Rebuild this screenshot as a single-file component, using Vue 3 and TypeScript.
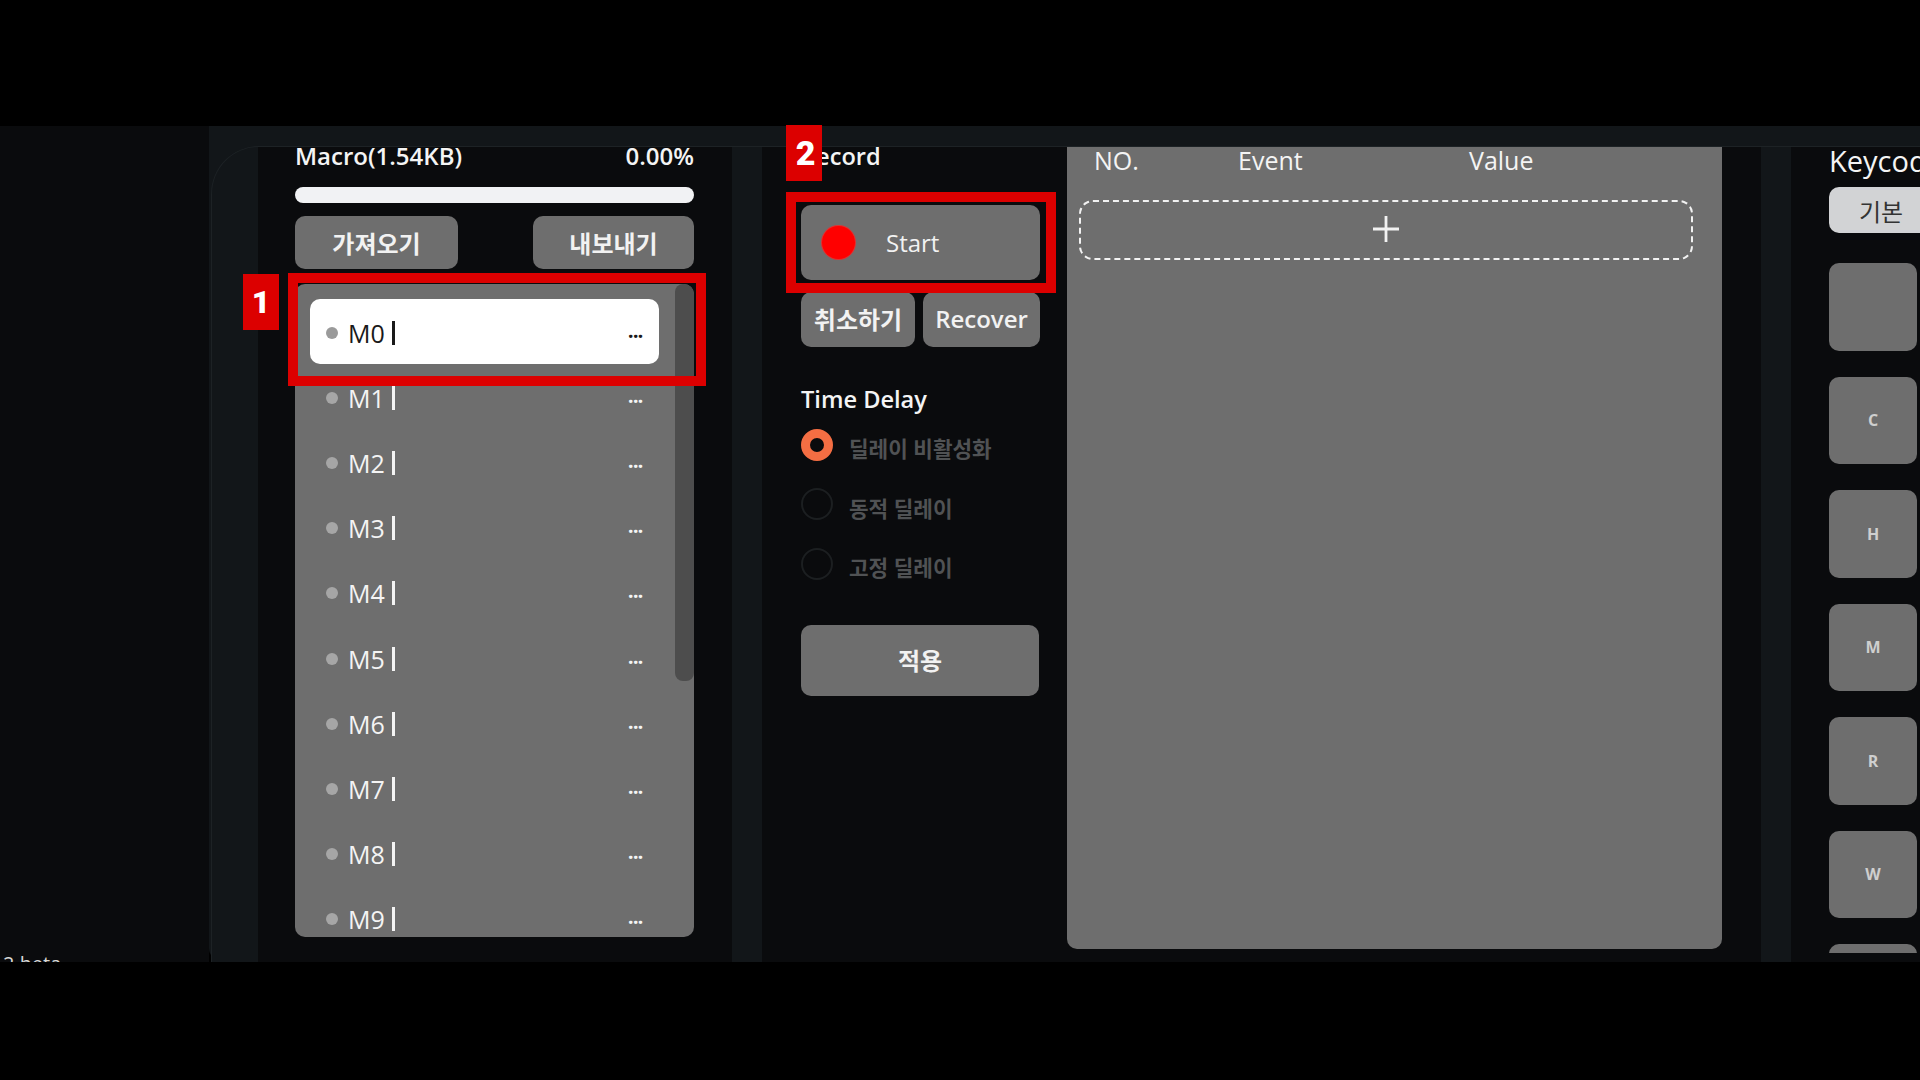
<script setup lang="ts">
const macros = ['M0', 'M1', 'M2', 'M3', 'M4', 'M5', 'M6', 'M7', 'M8', 'M9'];
const delays = ['딜레이 비활성화', '동적 딜레이', '고정 딜레이'];
const keys = ['', 'C', 'H', 'M', 'R', 'W', ''];
</script>

<template>
  <div class="page">
    <div class="frame">
      <aside class="sidebar">
        <span class="version">2 beta</span>
      </aside>

      <main class="main">
        <div class="content">
          <section class="panel panel-macro">
            <div class="stats">
              <span>Macro(1.54KB)</span>
              <span>0.00%</span>
            </div>
            <div class="progress"></div>
            <div class="io-row">
              <button class="btn btn-import">가져오기</button>
              <button class="btn btn-export">내보내기</button>
            </div>
            <div class="macro-list">
              <div class="scrollbar"></div>
              <div
                v-for="(name, i) in macros"
                :key="name"
                class="macro-row"
                :class="{ active: i === 0 }"
              >
                <span class="dot"></span>
                <span class="macro-name">{{ name }}</span>
                <span class="caret"></span>
                <span class="more">...</span>
              </div>
            </div>
          </section>

          <section class="panel panel-record">
            <div class="record-col">
              <div class="title">Record</div>
              <button class="btn btn-start">
                <span class="rec-dot"></span>
                <span>Start</span>
              </button>
              <div class="action-row">
                <button class="btn btn-cancel">취소하기</button>
                <button class="btn btn-recover">Recover</button>
              </div>
              <div class="title delay-title">Time Delay</div>
              <div class="radio-group">
                <div v-for="(label, i) in delays" :key="label" class="radio-row">
                  <span class="radio" :class="{ checked: i === 0 }"></span>
                  <span class="radio-label">{{ label }}</span>
                </div>
              </div>
              <button class="btn btn-apply">적용</button>
            </div>

            <div class="event-table">
              <div class="table-head">
                <span class="col-no">NO.</span>
                <span class="col-event">Event</span>
                <span>Value</span>
              </div>
              <div class="add-row">
                <svg width="30" height="30" viewBox="0 0 30 30">
                  <path d="M15 2v26M2 15h26" stroke="#f2f2f2" stroke-width="2.8" fill="none" />
                </svg>
              </div>
            </div>
          </section>

          <section class="panel panel-keys">
            <div class="keys-title">Keycode</div>
            <div class="tab">기본</div>
            <div class="key-list">
              <div v-for="(k, i) in keys" :key="i" class="key">{{ k }}</div>
            </div>
          </section>
        </div>
      </main>
    </div>

    <!-- 标注层 -->
    <div class="mark-box mark-box-1"></div>
    <div class="mark-badge mark-badge-1">1</div>
    <div class="mark-box mark-box-2"></div>
    <div class="mark-badge mark-badge-2">2</div>
  </div>
</template>

<style>
html,
body {
  margin: 0;
  background: #000;
}
</style>

<style scoped>
.page {
  position: relative;
  width: 1920px;
  height: 1080px;
  box-sizing: border-box;
  padding-top: 126px;
  overflow: hidden;
  background: #000;
  font-family: 'Open Sans', 'Noto Sans CJK KR', sans-serif;
  color: #f4f4f4;
}

.frame {
  display: flex;
  height: 836px;
  overflow: hidden;
}

.sidebar {
  display: flex;
  align-items: flex-end;
  flex: 0 0 209px;
  background: #0a0b0d;
}

.version {
  margin: 0 0 -12px 3px;
  font-size: 20px;
  line-height: 20px;
  color: #d8d8d8;
}

.main {
  flex: 1;
  min-width: 0;
  padding-top: 20px;
  background: #121619;
  border-bottom-left-radius: 14px;
}

.content {
  display: flex;
  gap: 30px;
  height: 816px;
  box-sizing: border-box;
  padding-left: 46px;
  margin-left: 2px;
  background: #121619;
  border-top: 1px solid #1d2225;
  border-left: 1px solid #1d2225;
  border-top-left-radius: 48px;
}

.panel {
  overflow: hidden;
  background: #0a0b0d;
}

.panel-macro {
  flex: 0 0 437px;
  padding-left: 37px;
}

.stats {
  display: flex;
  justify-content: space-between;
  width: 399px;
  margin-top: -7px;
  font-size: 24px;
  font-weight: 600;
  line-height: 32px;
}

.progress {
  width: 399px;
  height: 16px;
  margin-top: 15px;
  border-radius: 8px;
  background: #f1f2f4;
}

.io-row {
  display: flex;
  justify-content: space-between;
  width: 399px;
  margin-top: 13px;
}

.btn {
  display: flex;
  align-items: center;
  justify-content: center;
  padding: 0;
  border: 0;
  border-radius: 10px;
  background: #6e6e6e;
  color: #f2f2f2;
  font-family: inherit;
  font-size: 24px;
  font-weight: 600;
}

.btn-import {
  width: 163px;
  height: 53px;
}

.btn-export {
  width: 161px;
  height: 53px;
}

.macro-list {
  position: relative;
  width: 399px;
  height: 653px;
  box-sizing: border-box;
  margin-top: 15px;
  padding: 15px 0 0 15px;
  overflow: hidden;
  border-radius: 10px;
  background: #6e6e6e;
}

.scrollbar {
  position: absolute;
  top: 0;
  right: 0;
  width: 19px;
  height: 397px;
  border-radius: 8px;
  background: #4d4d4d;
}

.macro-row {
  display: flex;
  align-items: center;
  width: 349px;
  height: 65.2px;
  box-sizing: border-box;
  padding: 2px 16px 0 16px;
  border-radius: 10px;
  font-size: 25px;
  color: #f4f4f4;
}

.macro-row.active {
  background: #fff;
  color: #1a1a1a;
}

.dot {
  flex: 0 0 12px;
  height: 12px;
  border-radius: 50%;
  background: #a6a6a6;
}

.active .dot {
  background: #9a9a9a;
}

.macro-name {
  flex: 0 0 44px;
  margin-left: 10px;
}

.caret {
  width: 2.5px;
  height: 24px;
  background: currentColor;
}

.more {
  margin-left: auto;
  margin-top: -2px;
  font-size: 17px;
  font-weight: 800;
  line-height: 16px;
}

.panel-record {
  display: flex;
  flex: 0 0 960px;
  gap: 27px;
  padding-left: 39px;
}

.record-col {
  flex: 0 0 239px;
}

.title {
  margin-top: -7px;
  font-size: 23.6px;
  font-weight: 600;
  line-height: 32px;
}

.btn-start {
  justify-content: flex-start;
  width: 239px;
  height: 75px;
  margin-top: 33px;
  padding-left: 21px;
  font-weight: 500;
}

.rec-dot {
  width: 33px;
  height: 33px;
  margin-right: 31px;
  border-radius: 50%;
  background: #f00;
  box-shadow: 0 0 0 1px #d33;
}

.action-row {
  display: flex;
  justify-content: space-between;
  margin-top: 12px;
}

.btn-cancel {
  width: 114px;
  height: 55px;
  padding-bottom: 2px;
}

.btn-recover {
  width: 117px;
  height: 55px;
  padding-bottom: 2px;
}

.delay-title {
  margin-top: 36px;
}

.radio-group {
  display: flex;
  flex-direction: column;
  gap: 26.5px;
  margin-top: 13px;
}

.radio-row {
  display: flex;
  align-items: center;
  height: 33px;
}

.radio {
  flex: 0 0 32px;
  height: 32px;
  box-sizing: border-box;
  border: 2px solid #1c1f21;
  border-radius: 50%;
}

.radio.checked {
  border: 9px solid #f46e43;
  background: #0a0b0d;
}

.radio-label {
  margin: 6px 0 0 16px;
  font-size: 21.3px;
  font-weight: 600;
  color: #505254;
}

.btn-apply {
  width: 238px;
  height: 71px;
  margin-top: 45px;
  padding-bottom: 2px;
}

.event-table {
  flex: 0 0 655px;
  height: 802px;
  border-radius: 0 0 10px 10px;
  background: #6e6e6e;
}

.table-head {
  display: flex;
  height: 30px;
  margin-top: -2px;
  padding-left: 27px;
  font-size: 25px;
  font-weight: 500;
  line-height: 30px;
}

.col-no {
  flex: 0 0 144px;
}

.col-event {
  flex: 0 0 231px;
}

.add-row {
  display: flex;
  align-items: center;
  justify-content: center;
  width: 614px;
  height: 60px;
  box-sizing: border-box;
  margin: 25px 0 0 12px;
  border: 2px dashed #f2f2f2;
  border-radius: 14px;
}

.add-row svg {
  margin-top: -2px;
}

.panel-keys {
  flex: 1;
  min-width: 0;
  padding-left: 38px;
}

.keys-title {
  width: 200px;
  height: 36px;
  margin-top: -4px;
  font-size: 29px;
  font-weight: 500;
  line-height: 36px;
  white-space: nowrap;
}

.tab {
  display: flex;
  align-items: center;
  width: 120px;
  height: 46px;
  box-sizing: border-box;
  margin-top: 8px;
  padding-left: 30px;
  border-radius: 10px;
  background: #d2d3d5;
  color: #333;
  font-size: 24px;
}

.key-list {
  display: flex;
  flex-direction: column;
  gap: 26px;
  height: 690px;
  margin-top: 30px;
  overflow: hidden;
}

.key {
  display: flex;
  flex: 0 0 87.5px;
  align-items: center;
  justify-content: center;
  width: 88px;
  border-radius: 10px;
  background: #6e6e6e;
  color: #cfcfcf;
  font-size: 16px;
  font-weight: 700;
}

.mark-box {
  position: absolute;
  box-sizing: border-box;
  border: 10px solid #dc0000;
}

.mark-box-1 {
  top: 273px;
  left: 288px;
  width: 418px;
  height: 113px;
}

.mark-box-2 {
  top: 192px;
  left: 786px;
  width: 270px;
  height: 101px;
}

.mark-badge {
  position: absolute;
  display: flex;
  align-items: center;
  justify-content: center;
  width: 36px;
  height: 56px;
  background: #dc0000;
  color: #fff;
  font-family: 'Roboto', sans-serif;
  font-size: 32px;
  font-weight: 900;
}

.mark-badge-1 {
  top: 274px;
  left: 243px;
}

.mark-badge-2 {
  top: 125px;
  left: 786px;
  padding-left: 3px;
  box-sizing: border-box;
  font-size: 34px;
}
</style>
